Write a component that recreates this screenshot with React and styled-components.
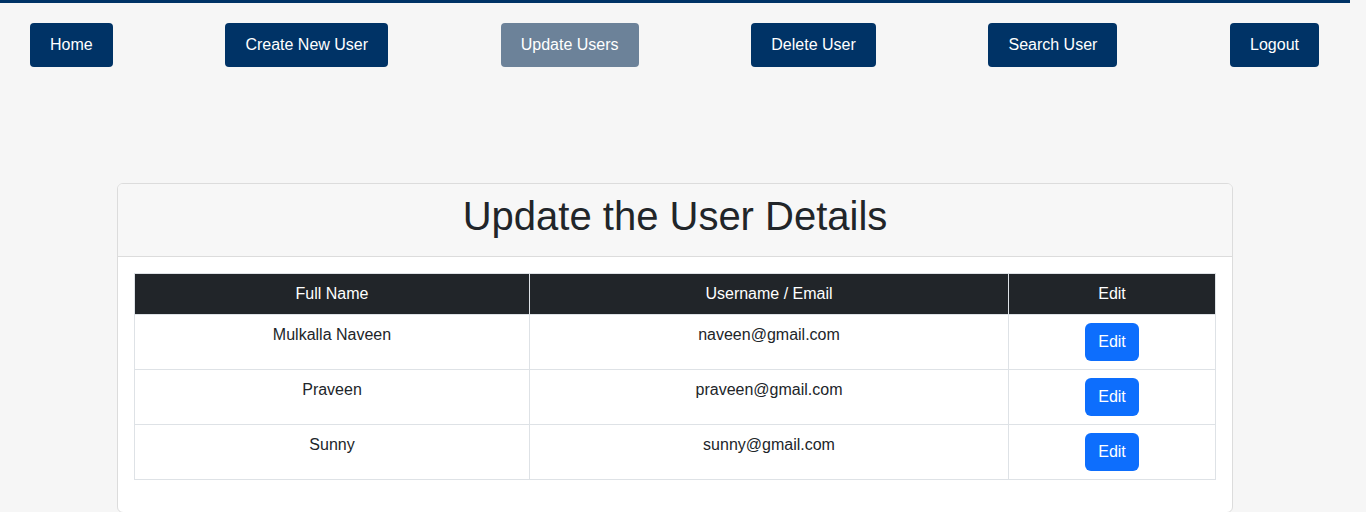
import React from "react";
import styled, { createGlobalStyle } from "styled-components";

const Global = createGlobalStyle`
  html, body { margin: 0; padding: 0; }
  body {
    background: #f6f6f6;
    font-family: "Liberation Sans", Arial, sans-serif;
    color: #212529;
    font-size: 16px;
    line-height: 1.5;
  }
  * { box-sizing: border-box; }
`;

const Page = styled.div`
  width: calc(100% - 16px);
  border-top: 3px solid #003366;
  padding-bottom: 20px;
`;

const Nav = styled.nav`
  display: flex;
  justify-content: space-between;
  align-items: center;
  padding: 20px 31px 0 30px;
`;

const NavButton = styled.button`
  height: 44px;
  padding: 0 20px;
  border: none;
  border-radius: 4px;
  background: ${(p) => (p.$active ? "#6c8299" : "#003366")};
  color: #fff;
  font-family: inherit;
  font-size: 16px;
  cursor: pointer;
`;

const Card = styled.section`
  margin: 116px 117px 0 117px;
  background: #fff;
  border: 1px solid #dcdcdc;
  border-radius: 6px;
  overflow: hidden;
`;

const CardHeader = styled.header`
  background: #f7f7f7;
  border-bottom: 1px solid #dcdcdc;
  padding: 8px 16px;
  text-align: center;
`;

const Title = styled.h1`
  margin: 0 0 8px;
  font-size: 40px;
  font-weight: 400;
  line-height: 1.2;
  color: #212529;
`;

const CardBody = styled.div`
  padding: 16px;
`;

const Table = styled.table`
  width: 100%;
  border-collapse: collapse;
  margin-bottom: 16px;
  table-layout: fixed;
`;

const Th = styled.th`
  background: #212529;
  color: #fff;
  font-weight: 400;
  padding: 8px;
  border: 1px solid #dee2e6;
  text-align: center;
  width: ${(p) => p.$w};
`;

const Td = styled.td`
  padding: 8px;
  border: 1px solid #dee2e6;
  text-align: center;
  vertical-align: top;
  color: #212529;
`;

const EditButton = styled.button`
  height: 38px;
  padding: 0 13px;
  border: none;
  border-radius: 6px;
  background: #0d6efd;
  color: #fff;
  font-family: inherit;
  font-size: 16px;
  cursor: pointer;
`;

const navItems = ["Home", "Create New User", "Update Users", "Delete User", "Search User", "Logout"];

const users = [
  { name: "Mulkalla Naveen", email: "naveen@gmail.com" },
  { name: "Praveen", email: "praveen@gmail.com" },
  { name: "Sunny", email: "sunny@gmail.com" },
];

export default function App() {
  return (
    <>
      <Global />
      <Page>
        <Nav>
          {navItems.map((n) => (
            <NavButton key={n} $active={n === "Update Users"}>
              {n}
            </NavButton>
          ))}
        </Nav>
        <Card>
          <CardHeader>
            <Title>Update the User Details</Title>
          </CardHeader>
          <CardBody>
            <Table>
              <thead>
                <tr>
                  <Th $w="395px">Full Name</Th>
                  <Th $w="479px">Username / Email</Th>
                  <Th>Edit</Th>
                </tr>
              </thead>
              <tbody>
                {users.map((u) => (
                  <tr key={u.email}>
                    <Td>{u.name}</Td>
                    <Td>{u.email}</Td>
                    <Td>
                      <EditButton>Edit</EditButton>
                    </Td>
                  </tr>
                ))}
              </tbody>
            </Table>
          </CardBody>
        </Card>
      </Page>
    </>
  );
}
